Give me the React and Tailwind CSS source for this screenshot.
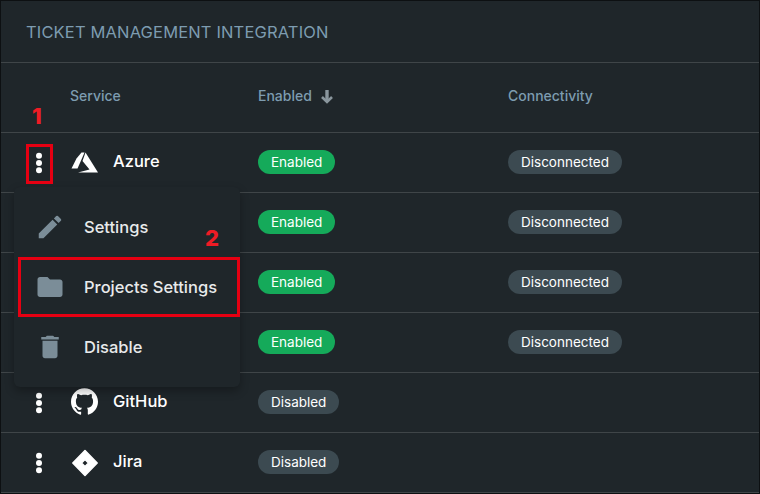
import { MdEdit, MdFolder, MdDelete } from 'react-icons/md';
import { SiGithub } from 'react-icons/si';

const FONT = { fontFamily: 'Inter, "Noto Sans", sans-serif' };

// the menu covers the names of the three middle rows
const services = [
  { id: 1, name: 'Azure', logo: 'azure', enabled: true },
  { id: 2, name: '', logo: 'none', enabled: true },
  { id: 3, name: '', logo: 'none', enabled: true },
  { id: 4, name: '', logo: 'none', enabled: true },
  { id: 5, name: 'GitHub', logo: 'github', enabled: false },
  { id: 6, name: 'Jira', logo: 'jira', enabled: false },
];

function Kebab() {
  return (
    <svg width="8" height="24" viewBox="0 0 8 24" fill="white" className="mt-[2px]">
      <circle cx="4" cy="4.7" r="3" />
      <circle cx="4" cy="12" r="3" />
      <circle cx="4" cy="19.3" r="3" />
    </svg>
  );
}

function AzureLogo() {
  return (
    <svg width="28" height="22" viewBox="0 0 28 22" fill="white" className="mt-[1px]">
      <path d="M10.5 1.5 L5.5 7.5 L0.5 17.5 L6.5 17.5 L13.5 1.5 Z" />
      <path d="M14.5 1.5 L27 21.5 L7 21.5 L18.5 18.5 L11.5 10 Z" />
    </svg>
  );
}

function JiraLogo() {
  return (
    <svg width="28" height="28" viewBox="0 0 28 28" fill="white" className="mt-[2px]">
      <path
        fillRule="evenodd"
        stroke="white"
        strokeWidth="1.5"
        strokeLinejoin="round"
        d="M14 1.5 L26.2 14 L14 26.5 L1.8 14 Z M14 10.5 L10.5 14 L14 17.5 L17.5 14 Z"
      />
    </svg>
  );
}

function SortArrow() {
  return (
    <svg width="12" height="14" viewBox="0 0 12 14" fill="none" stroke="#8a969d" className="mt-[3px]">
      <path d="M6 0 V12" strokeWidth="3.4" />
      <path d="M1 7 L6 12 L11 7" strokeWidth="2.6" />
    </svg>
  );
}

function Logo({ type }) {
  if (type === 'azure') return <AzureLogo />;
  if (type === 'github') return <SiGithub size={27} color="white" />;
  if (type === 'jira') return <JiraLogo />;
  return null;
}

function Badge({ children, green }) {
  return (
    <span
      className={`flex h-6 items-center rounded-full px-[13px] pt-[1px] text-[13.5px] leading-none text-white ${
        green ? 'bg-[#15aa5a]' : 'bg-[#3c4a51]'
      }`}
    >
      {children}
    </span>
  );
}

function MenuItem({ icon, label }) {
  return (
    <div className="flex h-[60px] items-center pl-[21px] text-[16.5px] font-medium text-[#e8eaeb]">
      <span className="flex w-[49px] text-[#7b8d98]">{icon}</span>
      {label}
    </div>
  );
}

export default function App() {
  return (
    <div
      className="relative h-[494px] w-[760px] overflow-hidden border border-[#0d1012] bg-[#1f262a]"
      style={FONT}
    >
      <div className="flex h-[62px] items-center border-b border-[#3f4548] pt-[1px] pl-[25px] text-[16.5px] tracking-[0.15px] text-[#7d9cb0]">
        TICKET MANAGEMENT INTEGRATION
      </div>

      <div className="flex h-[70px] border-b border-[#3f4548] pt-[24px] text-[14px] font-medium leading-[18px] text-[#7d9cb0]">
        <div className="w-[69px]" />
        <div className="w-[188px]">Service</div>
        <div className="flex w-[250px] items-start gap-[9px]">
          Enabled
          <SortArrow />
        </div>
        <div>Connectivity</div>
      </div>

      {services.map((s) => (
        <div key={s.id} className="flex h-[60px] items-center border-b border-[#3f4548] pb-[1px] last:border-b-0">
          <div className="flex w-[69px] pl-[34px]">
            <Kebab />
          </div>
          <div className="flex w-[188px] items-center pb-[1px] text-[16.5px] font-medium text-white">
            <span className="flex w-[43px] pl-[1px]">
              <Logo type={s.logo} />
            </span>
            {s.name}
          </div>
          <div className="flex w-[250px]">
            <Badge green={s.enabled}>{s.enabled ? 'Enabled' : 'Disabled'}</Badge>
          </div>
          {s.enabled && <Badge>Disconnected</Badge>}
        </div>
      ))}

      {/* dropdown opened from the first row */}
      <div className="absolute left-[13px] top-[186px] w-[226px] rounded-md bg-[#1f262a] py-[10px] shadow-[0_4px_10px_rgba(0,0,0,0.3)]">
        <MenuItem icon={<MdEdit size={30} />} label="Settings" />
        <MenuItem icon={<MdFolder size={30} />} label="Projects Settings" />
        <MenuItem icon={<MdDelete size={30} />} label="Disable" />
      </div>

      {/* red annotations on top of the screenshot */}
      <div className="absolute left-[25px] top-[143px] h-[40px] w-[27px] border-[3px] border-[#e60012]" />
      <div className="absolute left-[17px] top-[256px] h-[60px] w-[222px] border-[3px] border-[#e60012]" />
      <div className="absolute left-[31px] top-[101px] text-[22px] font-extrabold leading-[28px] text-[#ee1c25]">1</div>
      <div className="absolute left-[204px] top-[223px] text-[22px] font-extrabold leading-[28px] text-[#ee1c25]">2</div>
    </div>
  );
}
